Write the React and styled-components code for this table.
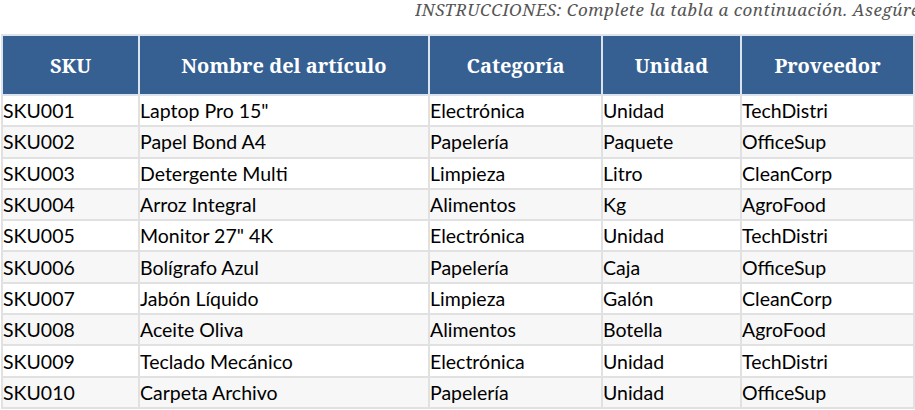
import React from 'react';
import styled, { createGlobalStyle } from 'styled-components';

const GlobalStyle = createGlobalStyle`
  html, body {
    margin: 0;
    padding: 0;
    background: #ffffff;
    overflow: hidden;
  }
`;

const Page = styled.div`
  width: 915px;
  display: flex;
  flex-direction: column;
`;

const Instructions = styled.p`
  margin: 0 0 0 415px;
  height: 34px;
  white-space: nowrap;
  overflow: hidden;
  font-family: "Noto Serif", "DejaVu Serif", serif;
  font-style: italic;
  font-size: 17px;
  letter-spacing: 0.5px;
  line-height: 19px;
  color: #555555;
`;

const Table = styled.table`
  border-collapse: collapse;
  margin-left: 1px;
  table-layout: fixed;
  width: 912px;
`;

const HeadCell = styled.th`
  height: 58px;
  padding: 0;
  background: #366092;
  color: #ffffff;
  border: 2px solid #dde3ec;
  font-family: "Noto Serif", "DejaVu Serif", serif;
  font-weight: 700;
  font-size: 20px;
  text-align: center;
`;

const Row = styled.tr`
  background: ${({ $striped }) => ($striped ? '#f7f7f7' : '#ffffff')};
`;

const Cell = styled.td`
  height: 29.3px;
  padding: 0;
  border: 2px solid #e1e1e1;
  font-family: Lato, "Liberation Sans", sans-serif;
  font-size: 19.5px;
  color: #000000;
  white-space: nowrap;
  overflow: hidden;
  vertical-align: middle;
`;

const columns = [
  { key: 'sku', label: 'SKU', width: 137 },
  { key: 'name', label: 'Nombre del artículo', width: 290 },
  { key: 'category', label: 'Categoría', width: 173 },
  { key: 'unit', label: 'Unidad', width: 139 },
  { key: 'supplier', label: 'Proveedor', width: 173 },
];

const items = [
  ['SKU001', 'Laptop Pro 15"', 'Electrónica', 'Unidad', 'TechDistri'],
  ['SKU002', 'Papel Bond A4', 'Papelería', 'Paquete', 'OfficeSup'],
  ['SKU003', 'Detergente Multi', 'Limpieza', 'Litro', 'CleanCorp'],
  ['SKU004', 'Arroz Integral', 'Alimentos', 'Kg', 'AgroFood'],
  ['SKU005', 'Monitor 27" 4K', 'Electrónica', 'Unidad', 'TechDistri'],
  ['SKU006', 'Bolígrafo Azul', 'Papelería', 'Caja', 'OfficeSup'],
  ['SKU007', 'Jabón Líquido', 'Limpieza', 'Galón', 'CleanCorp'],
  ['SKU008', 'Aceite Oliva', 'Alimentos', 'Botella', 'AgroFood'],
  ['SKU009', 'Teclado Mecánico', 'Electrónica', 'Unidad', 'TechDistri'],
  ['SKU010', 'Carpeta Archivo', 'Papelería', 'Unidad', 'OfficeSup'],
];

const App = () => (
  <Page>
    <GlobalStyle />
    <Instructions>
      INSTRUCCIONES: Complete la tabla a continuación. Asegúrese de llenar todos los campos requeridos.
    </Instructions>
    <Table>
      <colgroup>
        {columns.map(({ key, width }) => (
          <col key={key} style={{ width }} />
        ))}
      </colgroup>
      <thead>
        <tr>
          {columns.map(({ key, label }) => (
            <HeadCell key={key}>{label}</HeadCell>
          ))}
        </tr>
      </thead>
      <tbody>
        {items.map((row, i) => (
          <Row key={row[0]} $striped={i % 2 === 1}>
            {row.map((value, j) => (
              <Cell key={columns[j].key}>{value}</Cell>
            ))}
          </Row>
        ))}
      </tbody>
    </Table>
  </Page>
);

export default App;
